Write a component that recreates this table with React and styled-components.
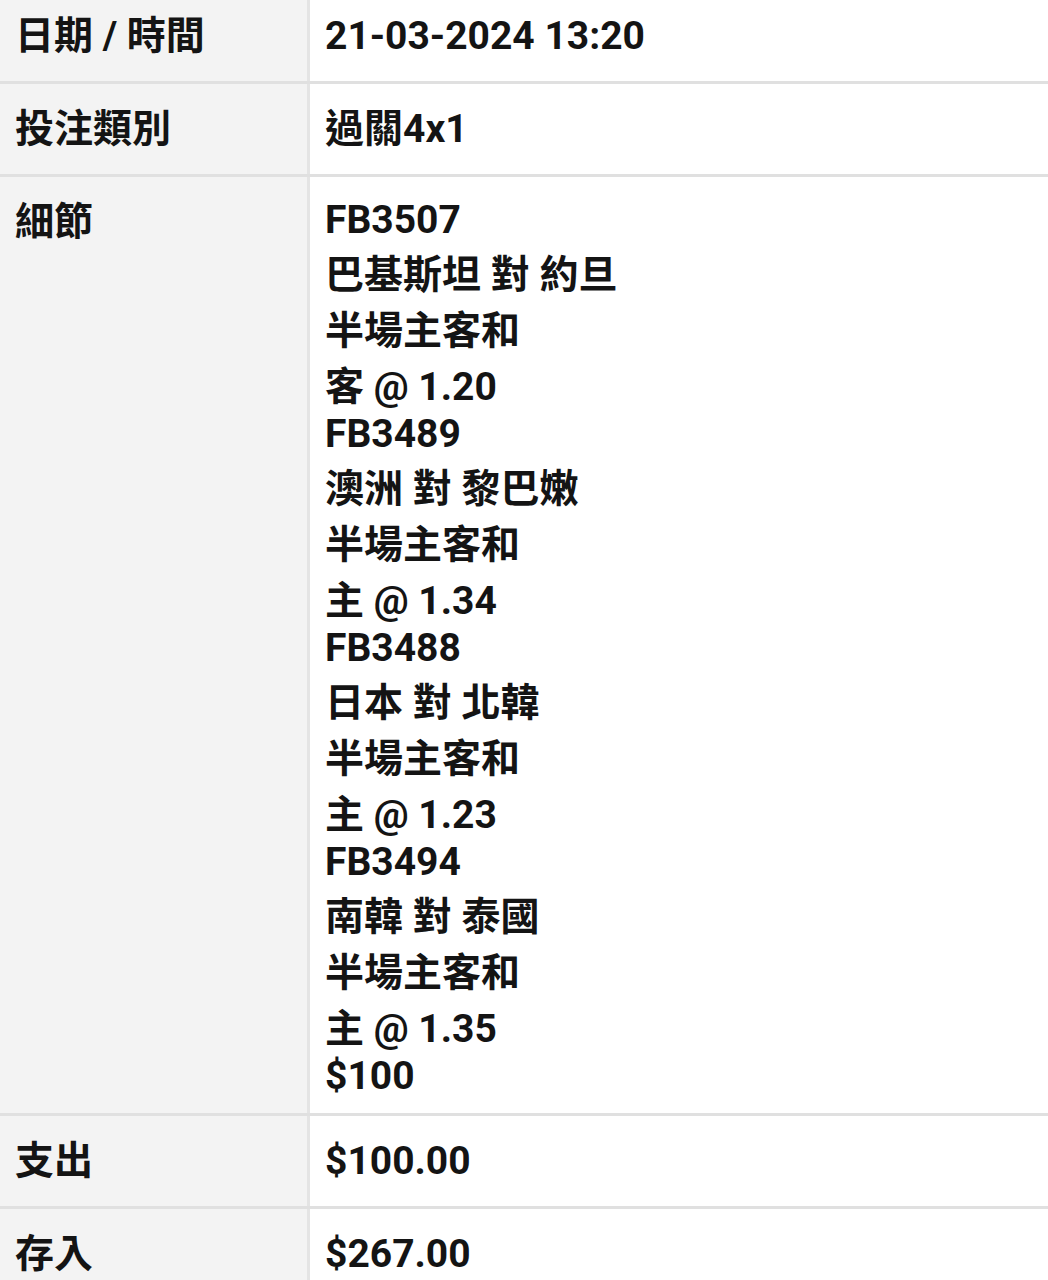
import React from 'react';
import styled, { createGlobalStyle } from 'styled-components';

const GlobalStyle = createGlobalStyle`
  html, body {
    margin: 0;
    padding: 0;
    background: #ffffff;
  }
  body {
    font-family: Roboto, "Noto Sans CJK TC", "Noto Sans CJK SC", sans-serif;
    color: #141414;
  }
`;

const Table = styled.div`
  width: 1048px;
  margin-top: -9px;
  overflow: hidden;
`;

const Row = styled.div`
  display: grid;
  grid-template-columns: 310px 1fr;
  align-items: ${(p) => (p.$top ? 'stretch' : 'baseline')};
  border-bottom: 3px solid #e0e0e0;
`;

const Label = styled.div`
  background: #f3f3f3;
  border-right: 3px solid #e4e4e4;
  padding: 13px 15px 21px;
  font-size: 39px;
  font-weight: 700;
  white-space: nowrap;
`;

const Value = styled.div`
  padding: ${(p) => (p.$tall ? '20px 15px 14px' : '13px 15px 10px')};
  font-size: 39px;
  font-weight: 700;
`;

const Line = styled.div``;

const legs = [
  { code: 'FB3507', match: '巴基斯坦 對 約旦', pick: '客 @ 1.20' },
  { code: 'FB3489', match: '澳洲 對 黎巴嫩', pick: '主 @ 1.34' },
  { code: 'FB3488', match: '日本 對 北韓', pick: '主 @ 1.23' },
  { code: 'FB3494', match: '南韓 對 泰國', pick: '主 @ 1.35' },
];

const App = () => (
  <>
    <GlobalStyle />
    <Table>
      <Row>
        <Label>日期 / 時間</Label>
        <Value>21-03-2024 13:20</Value>
      </Row>
      <Row>
        <Label>投注類別</Label>
        <Value>過關4x1</Value>
      </Row>
      <Row $top>
        <Label>細節</Label>
        <Value $tall>
          {legs.map((leg) => (
            <React.Fragment key={leg.code}>
              <Line>{leg.code}</Line>
              <Line>{leg.match}</Line>
              <Line>半場主客和</Line>
              <Line>{leg.pick}</Line>
            </React.Fragment>
          ))}
          <Line>$100</Line>
        </Value>
      </Row>
      <Row>
        <Label>支出</Label>
        <Value>$100.00</Value>
      </Row>
      <Row>
        <Label>存入</Label>
        <Value>$267.00</Value>
      </Row>
    </Table>
  </>
);

export default App;
